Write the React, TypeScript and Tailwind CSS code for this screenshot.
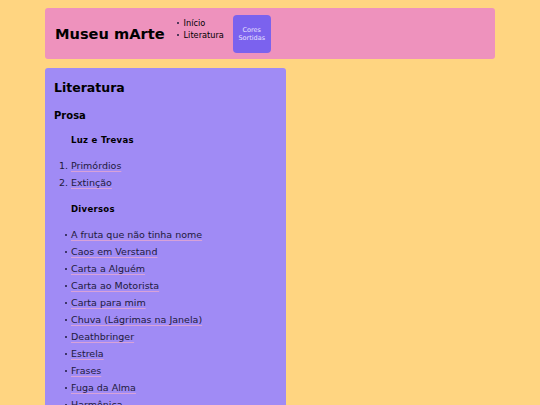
import React from "react";

const diversos = [
  "A fruta que não tinha nome",
  "Caos em Verstand",
  "Carta a Alguém",
  "Carta ao Motorista",
  "Carta para mim",
  "Chuva (Lágrimas na Janela)",
  "Deathbringer",
  "Estrela",
  "Frases",
  "Fuga da Alma",
  "Harmônica",
];

const linkCls =
  "text-[#1e1a3c] underline decoration-[#d8a2d8] decoration-1 underline-offset-[2px]";

function Dot() {
  return <span className="h-[2px] w-[2px] shrink-0 rounded-full bg-[#1e1a3c]" />;
}

export default function App() {
  return (
    <div
      className="min-h-[405px] w-full bg-[#ffd581] px-[45px] pt-[8px] pb-[20px] text-black"
      style={{ fontFamily: '"DejaVu Sans", sans-serif' }}
    >
      <header className="flex h-[51px] items-center rounded-[3px] bg-[#ee92bd] pl-[10px]">
        <h1 className="text-[14.6px] font-bold leading-[20px] text-black">Museu mArte</h1>
        <ul className="ml-[12px] mt-[9px] self-start text-[8.2px] leading-[12px]">
          <li className="flex items-center gap-[5px]">
            <Dot />
            <span>Início</span>
          </li>
          <li className="flex items-center gap-[5px]">
            <Dot />
            <span>Literatura</span>
          </li>
        </ul>
        <div className="ml-[9px] flex h-[38px] w-[38px] items-center justify-center rounded-[4px] bg-[#7b62ee] text-center text-[6.5px] leading-[8px] text-[#e6e0ff]">
          Cores
          <br />
          Sortidas
        </div>
      </header>

      <main className="mt-[9px] w-[241px] rounded-[3px] bg-[#a08bf5] px-[9px] pt-[10px] pb-[12px]">
        <h2 className="text-[12.5px] font-bold leading-[20px]">Literatura</h2>
        <h3 className="mt-[11px] text-[10px] font-bold leading-[14px]">Prosa</h3>
        <h4 className="mt-[10px] pl-[17px] text-[8.5px] font-bold leading-[14px] tracking-[0.3px]">
          Luz e Trevas
        </h4>
        <ol className="mt-[10px] list-decimal pl-[17px] text-[9.5px] leading-[17px] marker:text-[#1e1a3c]">
          <li>
            <a className={linkCls}>Primórdios</a>
          </li>
          <li>
            <a className={linkCls}>Extinção</a>
          </li>
        </ol>
        <h4 className="mt-[11px] pl-[17px] text-[8.5px] font-bold leading-[14px] tracking-[0.3px]">
          Diversos
        </h4>
        <ul className="mt-[10px] pl-[11px] text-[9.5px] leading-[17px]">
          {diversos.map((d) => (
            <li key={d} className="flex items-center gap-[4px]">
              <Dot />
              <a className={linkCls}>{d}</a>
            </li>
          ))}
        </ul>
      </main>
    </div>
  );
}
